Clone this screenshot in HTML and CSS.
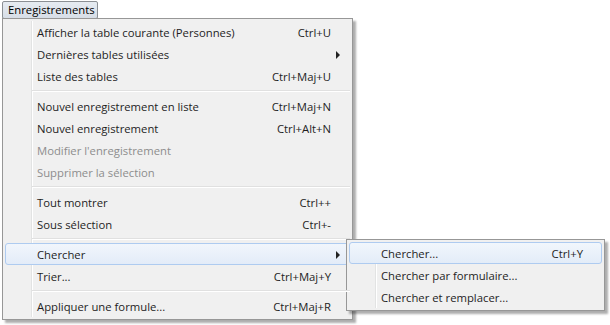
FILE: index.html
```html
<!DOCTYPE html>
<html lang="fr">
<head>
    <meta charset="UTF-8">
    <title>Enregistrements</title>
    <link rel="stylesheet" href="styles.css">
</head>
<body>
<div class="menubar">
    <span class="menubar-item open">Enregistrements</span>
</div>

<div class="menu main-menu">
    <div class="item"><span>Afficher la table courante (Personnes)</span><span class="key">Ctrl+U</span></div>
    <div class="item has-sub"><span>Dernières tables utilisées</span></div>
    <div class="item"><span>Liste des tables</span><span class="key">Ctrl+Maj+U</span></div>
    <div class="sep"></div>
    <div class="item"><span>Nouvel enregistrement en liste</span><span class="key">Ctrl+Maj+N</span></div>
    <div class="item"><span>Nouvel enregistrement</span><span class="key">Ctrl+Alt+N</span></div>
    <div class="item disabled"><span>Modifier l'enregistrement</span></div>
    <div class="item disabled"><span>Supprimer la sélection</span></div>
    <div class="sep"></div>
    <div class="item"><span>Tout montrer</span><span class="key">Ctrl++</span></div>
    <div class="item"><span>Sous sélection</span><span class="key">Ctrl+-</span></div>
    <div class="sep"></div>
    <div class="item has-sub active"><span>Chercher</span>
        <div class="menu sub-menu">
            <div class="item active"><span>Chercher...</span><span class="key">Ctrl+Y</span></div>
            <div class="item"><span>Chercher par formulaire...</span></div>
            <div class="item"><span>Chercher et remplacer...</span></div>
        </div>
    </div>
    <div class="item"><span>Trier...</span><span class="key">Ctrl+Maj+Y</span></div>
    <div class="sep"></div>
    <div class="item"><span>Appliquer une formule...</span><span class="key">Ctrl+Maj+R</span></div>
</div>
</body>
</html>
```

FILE: styles.css
```css
body {
    margin: 0;
    background: #ffffff;
    font-family: 'Open Sans', 'Noto Sans', sans-serif;
    font-size: 11.3px;
    color: #1e1e1e;
    width: 610px;
    height: 325px;
    position: relative;
    overflow: hidden;
}
.menubar {
    padding: 1px 2px;
    height: 17px;
}
.menubar-item {
    display: inline-block;
    height: 16px;
    line-height: 15px;
    padding: 0 5px;
    width: 84px;
    border: 1px solid #8b8f94;
    border-radius: 2px;
    background: linear-gradient(#e6ebf1, #d7dee7);
    color: #000;
}
.menu {
    position: absolute;
    background: #f0f0f0;
    border: 1px solid #979797;
    padding: 2px;
    box-shadow: 3px 3px 2px rgba(0, 0, 0, 0.32);
}
.menu::before {
    content: "";
    position: absolute;
    top: 2px;
    bottom: 2px;
    left: 28px;
    width: 1px;
    background: #e2e3e3;
    border-right: 1px solid #ffffff;
}
.main-menu {
    left: 2px;
    top: 18px;
    width: 345px;
}
.sub-menu {
    left: 340px;
    top: -5px;
    width: 253px;
}
.item {
    position: relative;
    display: flex;
    justify-content: space-between;
    align-items: center;
    height: 22px;
    padding: 0 18px 0 31px;
    border: 1px solid transparent;
    border-radius: 3px;
    box-sizing: border-box;
}
.item.active {
    background: linear-gradient(#f1f6fc, #e3ecf8);
    border-color: #aecbf0;
}
.item.disabled {
    color: #8d8d8d;
}
.has-sub::after {
    content: "";
    position: absolute;
    right: 9px;
    top: 7px;
    border-left: 4px solid #222;
    border-top: 4px solid transparent;
    border-bottom: 4px solid transparent;
}
.sep {
    position: relative;
    height: 8px;
    margin-left: 27px;
}
.sep::after {
    content: "";
    position: absolute;
    left: 0;
    right: 0;
    top: 3px;
    height: 1px;
    background: #e0e0e0;
    border-bottom: 1px solid #ffffff;
}
```
